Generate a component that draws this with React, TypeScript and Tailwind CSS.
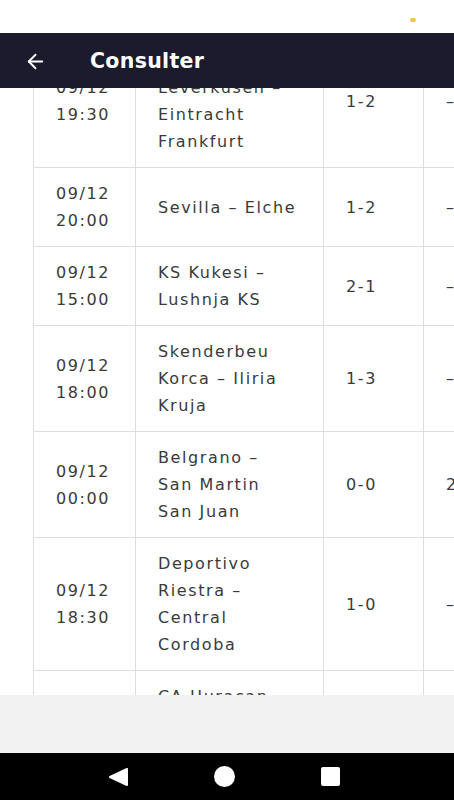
import { ArrowLeft } from 'lucide-react';

type Match = { date: string; time: string; teams: string[]; score: string; extra: string };

const MATCHES: Match[] = [
  { date: '09/12', time: '19:30', teams: ['Bayer', 'Leverkusen –', 'Eintracht', 'Frankfurt'], score: '1-2', extra: '–' },
  { date: '09/12', time: '20:00', teams: ['Sevilla – Elche'], score: '1-2', extra: '–' },
  { date: '09/12', time: '15:00', teams: ['KS Kukesi –', 'Lushnja KS'], score: '2-1', extra: '–' },
  { date: '09/12', time: '18:00', teams: ['Skenderbeu', 'Korca – Iliria', 'Kruja'], score: '1-3', extra: '–' },
  { date: '09/12', time: '00:00', teams: ['Belgrano –', 'San Martin', 'San Juan'], score: '0-0', extra: '2' },
  { date: '09/12', time: '18:30', teams: ['Deportivo', 'Riestra –', 'Central', 'Cordoba'], score: '1-0', extra: '–' },
  { date: '09/12', time: '21:00', teams: ['CA Huracan –', 'Sarmiento', 'Junin'], score: '2-2', extra: '–' },
];

function Row({ m }: { m: Match }) {
  return (
    <tr className="border-b border-[#dedede]">
      <td className="w-[102px] border-r border-[#dedede] px-[22px] py-3 align-middle">
        <div>{m.date}</div>
        <div>{m.time}</div>
      </td>
      <td className="w-[188px] border-r border-[#dedede] px-[22px] py-3 align-middle">
        {m.teams.map((t) => (
          <div key={t} className="whitespace-nowrap">{t}</div>
        ))}
      </td>
      <td className="w-[100px] border-r border-[#dedede] px-[22px] py-3 align-middle">{m.score}</td>
      <td className="w-[100px] px-[22px] py-3 align-middle">{m.extra}</td>
    </tr>
  );
}

export default function App() {
  return (
    <div className="h-[800px] w-[454px] flex flex-col overflow-hidden bg-white font-['DejaVu_Sans',sans-serif]">
      {/* Status bar */}
      <div className="h-[33px] shrink-0 bg-white flex items-center justify-end pr-[38px]">
        <div className="w-[6px] h-[4px] rounded-sm bg-[#f5c842] mt-[7px]" />
      </div>

      {/* Top bar */}
      <header className="h-[55px] shrink-0 bg-[#1c1b2d] flex items-center pl-[24px] pt-[2px] text-white z-10">
        <ArrowLeft size={23} strokeWidth={2} />
        <span className="ml-[43px] text-[20.5px] font-bold tracking-[0.015em]">Consulter</span>
      </header>

      {/* Table */}
      <div className="h-[607px] shrink-0 overflow-hidden">
        <div className="-mt-[54px] pl-[33px]">
          <table className="border-collapse border-l border-t border-[#dedede] text-[16px] leading-[27px] text-[#3a3a3a] tracking-[0.1em] w-[490px] table-fixed">
            <tbody>
              {MATCHES.map((m, i) => (
                <Row key={i} m={m} />
              ))}
            </tbody>
          </table>
        </div>
      </div>

      {/* Bottom gray area */}
      <div className="h-[58px] shrink-0 bg-[#f2f2f2]" />

      {/* Android nav bar */}
      <nav className="flex-1 bg-black flex items-center justify-center gap-[86px] pr-[6px]">
        <svg width="20" height="18" viewBox="0 0 20 18">
          <path d="M19 1 L19 17 L2 9 Z" fill="white" stroke="white" strokeLinejoin="round" strokeWidth="2" />
        </svg>
        <div className="w-[21px] h-[21px] rounded-full bg-white" />
        <div className="w-[19px] h-[19px] rounded-[2px] bg-white" />
      </nav>
    </div>
  );
}
